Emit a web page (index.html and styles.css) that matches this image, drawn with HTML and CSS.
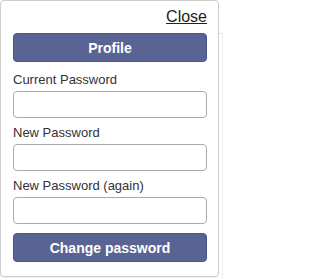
FILE: index.html
```html
<!DOCTYPE html>
<html>
<head>
<meta charset="utf-8">
<link rel="stylesheet" href="styles.css">
</head>
<body>
<div class="card">
  <div class="close-row"><a class="close" href="#">Close</a></div>
  <button class="btn" type="button">Profile</button>
  <form class="form">
    <label class="label first">Current Password</label>
    <input class="field" type="password">
    <label class="label">New Password</label>
    <input class="field" type="password">
    <label class="label">New Password (again)</label>
    <input class="field" type="password">
    <button class="btn submit" type="button">Change password</button>
  </form>
</div>
</body>
</html>
```
FILE: styles.css
```css
html, body {
  margin: 0;
  padding: 0;
}
body {
  width: 223px;
  height: 278px;
  background:
    linear-gradient(#e2e2e2, #e2e2e2) no-repeat 219px 33px / 4px 1px,
    linear-gradient(#ececec, #ececec) no-repeat 222px 33px / 1px 245px,
    #fff;
  font-family: "Liberation Sans", Arial, Helvetica, sans-serif;
}
.card {
  box-sizing: border-box;
  width: 219px;
  height: 277px;
  border: 1px solid #cdcdcd;
  border-radius: 4px;
  background: #fff;
  padding: 0 11px 14px 12px;
  box-shadow: 0 1px 1px rgba(0, 0, 0, 0.06);
}
.close-row {
  display: flex;
  justify-content: flex-end;
  padding-top: 7px;
  margin-bottom: 7px;
  line-height: 18px;
}
.close {
  font-size: 16px;
  color: #222;
  text-decoration: underline;
}
.btn {
  display: block;
  box-sizing: border-box;
  width: 100%;
  height: 29px;
  margin: 0;
  padding: 0;
  background: #5a6494;
  border: 1px solid #4b5482;
  border-radius: 4px;
  color: #fff;
  font-family: "Liberation Sans", Arial, Helvetica, sans-serif;
  font-size: 14px;
  font-weight: bold;
}
.form {
  margin: 0;
}
.label {
  display: block;
  margin: 7px 0 4px;
  font-size: 13px;
  line-height: 15px;
  color: #333;
}
.label.first {
  margin-top: 10px;
}
.field {
  display: block;
  box-sizing: border-box;
  width: 100%;
  height: 27px;
  margin: 0;
  border: 1px solid #aaa;
  border-radius: 4px;
  background: #fff;
}
.submit {
  margin-top: 9px;
}
```
